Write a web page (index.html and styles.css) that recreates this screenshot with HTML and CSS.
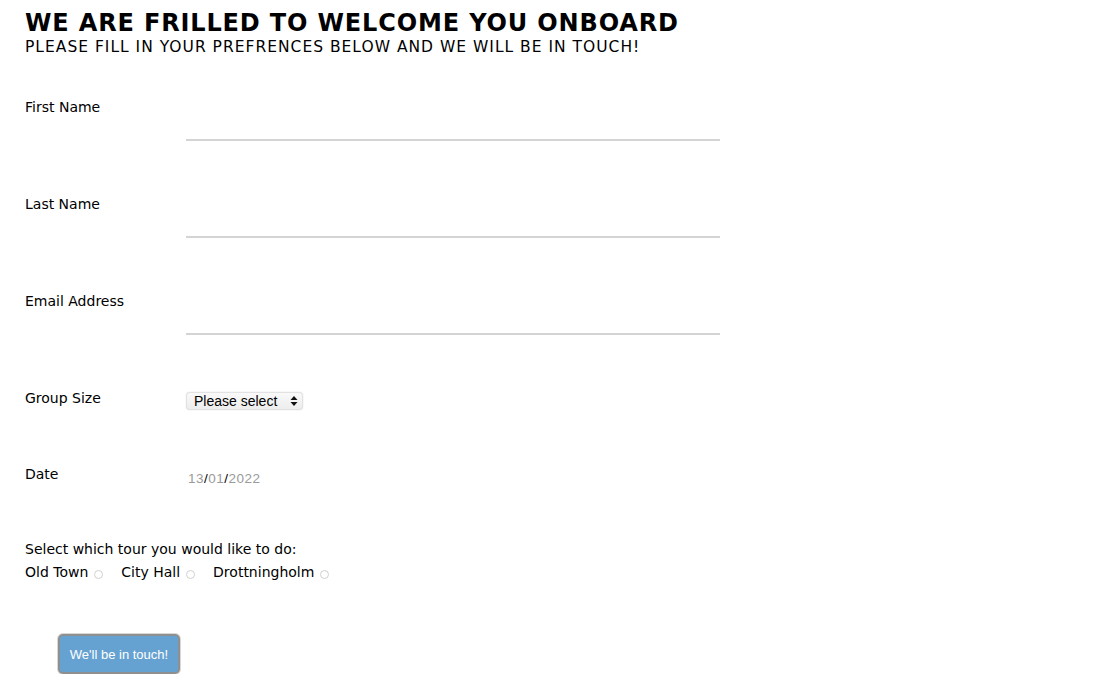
FILE: index.html
```html
<!DOCTYPE html>
<html>
<head>
<meta charset="utf-8">
<link rel="stylesheet" href="styles.css">
</head>
<body>
<header class="intro">
  <h1 class="title">WE ARE FRILLED TO WELCOME YOU ONBOARD</h1>
  <p class="subtitle">PLEASE FILL IN YOUR PREFRENCES BELOW AND WE WILL BE IN TOUCH!</p>
</header>
<form class="form">
  <div class="row row-text">
    <label class="label">First Name</label>
    <input class="line-input" type="text">
  </div>
  <div class="row row-text">
    <label class="label">Last Name</label>
    <input class="line-input" type="text">
  </div>
  <div class="row row-text">
    <label class="label">Email Address</label>
    <input class="line-input" type="text">
  </div>
  <div class="row row-select">
    <label class="label">Group Size</label>
    <div class="select">
      <span class="select-text">Please select</span>
      <svg class="select-arrows" width="8" height="12" viewBox="0 0 8 12"><path d="M4 1 L7.5 5 H0.5 Z M4 11 L7.5 7 H0.5 Z" fill="#111"/></svg>
    </div>
  </div>
  <div class="row row-date">
    <label class="label">Date</label>
    <div class="date"><span class="dim">13</span>/<span class="dim">01</span>/<span class="dim">2022</span></div>
  </div>
  <div class="tours">
    <p class="tours-q">Select which tour you would like to do:</p>
    <div class="tour-options">
      <label class="tour">Old Town <span class="radio"></span></label>
      <label class="tour">City Hall <span class="radio"></span></label>
      <label class="tour">Drottningholm <span class="radio"></span></label>
    </div>
  </div>
  <div class="actions">
    <button type="button" class="submit">We'll be in touch!</button>
  </div>
</form>
</body>
</html>
```

FILE: styles.css
```css
html, body {
  margin: 0;
  padding: 0;
  background: #fff;
}
body {
  padding: 0 25px;
  font-family: "DejaVu Sans", Verdana, sans-serif;
  color: #000;
}
.intro {
  padding-top: 9px;
}
.title {
  margin: 0;
  font-size: 24px;
  font-weight: bold;
  letter-spacing: 0.85px;
  line-height: 28px;
}
.subtitle {
  margin: 0;
  font-size: 15.5px;
  letter-spacing: 1px;
  line-height: 20px;
}
.form {
  padding-top: 40px;
}
.row {
  display: flex;
  align-items: flex-start;
}
.label {
  width: 161px;
  flex: none;
  font-size: 14px;
  line-height: 18px;
  margin-top: 1px;
}
.row-text {
  height: 97px;
}
.line-input {
  margin-top: 12px;
  width: 534px;
  height: 30px;
  border: none;
  border-bottom: 2px solid #d4d4d4;
  outline: none;
  padding: 0;
  background: transparent;
}
.row-select {
  height: 76px;
}
.select {
  margin-top: 4px;
  width: 117px;
  height: 18px;
  box-sizing: border-box;
  border-radius: 4px;
  background: linear-gradient(#fafafa, #ececec);
  box-shadow: inset 0 0 0 1px #e2e2e2, 0 0 1px #bbb;
  display: flex;
  align-items: center;
  justify-content: space-between;
  padding: 0 5px 0 8px;
  font-family: "Liberation Sans", Arial, sans-serif;
  font-size: 14px;
}
.select-arrows {
  display: block;
}
.row-date {
  height: 74px;
}
.date {
  margin-top: 7px;
  padding-left: 2px;
  font-family: "Liberation Sans", Arial, sans-serif;
  font-size: 13.5px;
  letter-spacing: 0.5px;
  color: #000;
}
.dim {
  color: #9a9a9a;
}
.tours-q {
  margin: 0;
  font-size: 14px;
  line-height: 23px;
}
.tour-options {
  display: flex;
  gap: 18px;
}
.tour {
  font-size: 14px;
  line-height: 23px;
  display: flex;
  align-items: center;
  gap: 6px;
}
.radio {
  width: 9px;
  height: 9px;
  border: 1px solid #d0d0d0;
  border-radius: 50%;
  box-sizing: border-box;
  margin-top: 3px;
  background: #fff;
}
.actions {
  padding: 50px 0 0 33px;
}
.submit {
  width: 122px;
  height: 40px;
  background: #66a2d1;
  border: 2px solid #8f8f8f;
  border-radius: 5px;
  box-shadow: 0 0 0 1px #d8d8d8;
  color: #fff;
  font-family: "Liberation Sans", Arial, sans-serif;
  font-size: 13px;
  padding: 0;
}
```
